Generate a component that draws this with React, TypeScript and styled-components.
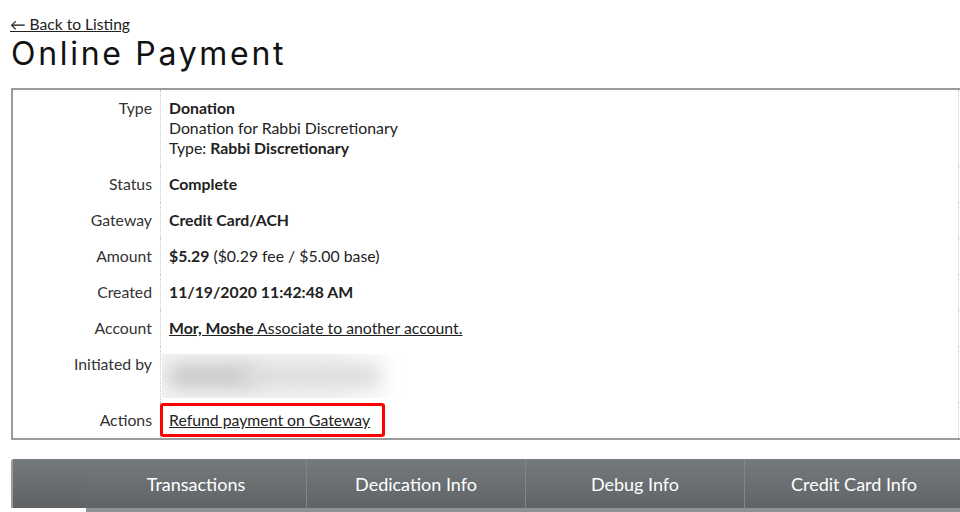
import React from 'react';
import styled, { createGlobalStyle } from 'styled-components';

const GlobalStyle = createGlobalStyle`
    html, body {
        margin: 0;
        padding: 0;
        overflow: hidden;
        background: #fff;
    }
    body {
        font-family: Lato, 'Liberation Sans', sans-serif;
        color: #222;
    }
`;

const Page = styled.div`
    width: 1300px;
    padding: 14px 0 0 11px;
`;

const BackLink = styled.a`
    display: inline-block;
    font-size: 15.6px;
    line-height: 20px;
    color: #222;
    text-decoration: underline;
    margin-left: -1px;
`;

const Title = styled.h1`
    margin: 0;
    font-family: Inter, 'DejaVu Sans', sans-serif;
    font-weight: 400;
    font-size: 32px;
    line-height: 40px;
    letter-spacing: 2.7px;
    color: #111;
`;

const DetailBox = styled.div`
    margin-top: 14px;
    border: 2px solid #9c9c9c;
    border-right: none;
    display: grid;
    grid-template-columns: 148px 798px 1fr;
    font-size: 15.8px;
    line-height: 20px;
`;

const Label = styled.div`
    text-align: right;
    padding: 8px 8px 8px 0;
    color: #333;
    border-right: 1px dotted #c8c8c8;
`;

const Value = styled.div`
    position: relative;
    padding: 8px 0 8px 8px;
    border-right: 1px dotted #c8c8c8;
    color: #222;
`;

const Spare = styled.div``;

const Strong = styled.b`
    font-weight: 700;
`;

const Link = styled.a`
    color: #222;
    text-decoration: underline;
`;

const Highlight = styled.span`
    position: absolute;
    left: -1px;
    top: 1px;
    width: 225px;
    bottom: 1px;
    border: 3px solid #f00;
    border-radius: 3px;
    box-sizing: border-box;
    pointer-events: none;
`;

const Redacted = styled.div`
    height: 44px;
    margin: 0 0 -4px -7px;
    width: 240px;
    position: relative;
    overflow: hidden;
    background: linear-gradient(90deg, #f2f2f2 0%, #f4f4f4 70%, #fff 100%);
`;

const Smudge = styled.div<{ $left: number; $width: number; $shade: string }>`
    position: absolute;
    top: 10px;
    height: 24px;
    left: ${p => p.$left}px;
    width: ${p => p.$width}px;
    background: ${p => p.$shade};
    border-radius: 12px;
    filter: blur(9px);
`;

const TabBar = styled.div`
    margin-top: 19px;
    display: flex;
    height: 53px;
    border-radius: 4px 0 0 0;
    overflow: hidden;
    background: linear-gradient(180deg, #757a7d 0%, #5e6265 100%);
`;

const TabSpacer = styled.div`
    width: 75px;
    border-bottom: 4px solid #fff;
    box-shadow: inset 2px 0 0 #9c9c9c;
    box-sizing: border-box;
    background: linear-gradient(180deg, #757a7d 0%, #5e6265 100%) top / 100% 49px no-repeat;
`;

const Tab = styled.div<{ $first?: boolean }>`
    width: ${p => (p.$first ? 220 : 218)}px;
    display: flex;
    align-items: center;
    justify-content: center;
    color: #fff;
    font-size: 18px;
    border-bottom: 4px solid #8e9396;
    border-left: ${p => (p.$first ? 'none' : '1px solid #80868a')};
`;

const rows: { label: string; value: React.ReactNode }[] = [
    {
        label: 'Type',
        value: (
            <>
                <Strong>Donation</Strong>
                <br />
                Donation for Rabbi Discretionary
                <br />
                Type: <Strong>Rabbi Discretionary</Strong>
            </>
        ),
    },
    { label: 'Status', value: <Strong>Complete</Strong> },
    { label: 'Gateway', value: <Strong>Credit Card/ACH</Strong> },
    {
        label: 'Amount',
        value: (
            <>
                <Strong>$5.29</Strong> ($0.29 fee / $5.00 base)
            </>
        ),
    },
    { label: 'Created', value: <Strong>11/19/2020 11:42:48 AM</Strong> },
    {
        label: 'Account',
        value: (
            <Link>
                <Strong>Mor, Moshe</Strong> Associate to another account.
            </Link>
        ),
    },
];

const tabs = ['Transactions', 'Dedication Info', 'Debug Info', 'Credit Card Info'];

const App = () => {
    return (
        <Page>
            <GlobalStyle />
            <BackLink>← Back to Listing</BackLink>
            <Title>Online Payment</Title>
            <DetailBox>
                {rows.map(row => (
                    <React.Fragment key={row.label}>
                        <Label>{row.label}</Label>
                        <Value>{row.value}</Value>
                        <Spare />
                    </React.Fragment>
                ))}
                <Label>Initiated by</Label>
                <Value>
                    <Redacted>
                        <Smudge $left={6} $width={90} $shade="#c8c8c8" />
                        <Smudge $left={80} $width={140} $shade="#dcdcdc" />
                    </Redacted>
                </Value>
                <Spare />
                <Label>Actions</Label>
                <Value>
                    <Link>Refund payment on Gateway</Link>
                    <Highlight />
                </Value>
                <Spare />
            </DetailBox>
            <TabBar>
                <TabSpacer />
                {tabs.map((t, i) => (
                    <Tab key={t} $first={i === 0}>
                        {t}
                    </Tab>
                ))}
            </TabBar>
        </Page>
    );
};

export default App;
